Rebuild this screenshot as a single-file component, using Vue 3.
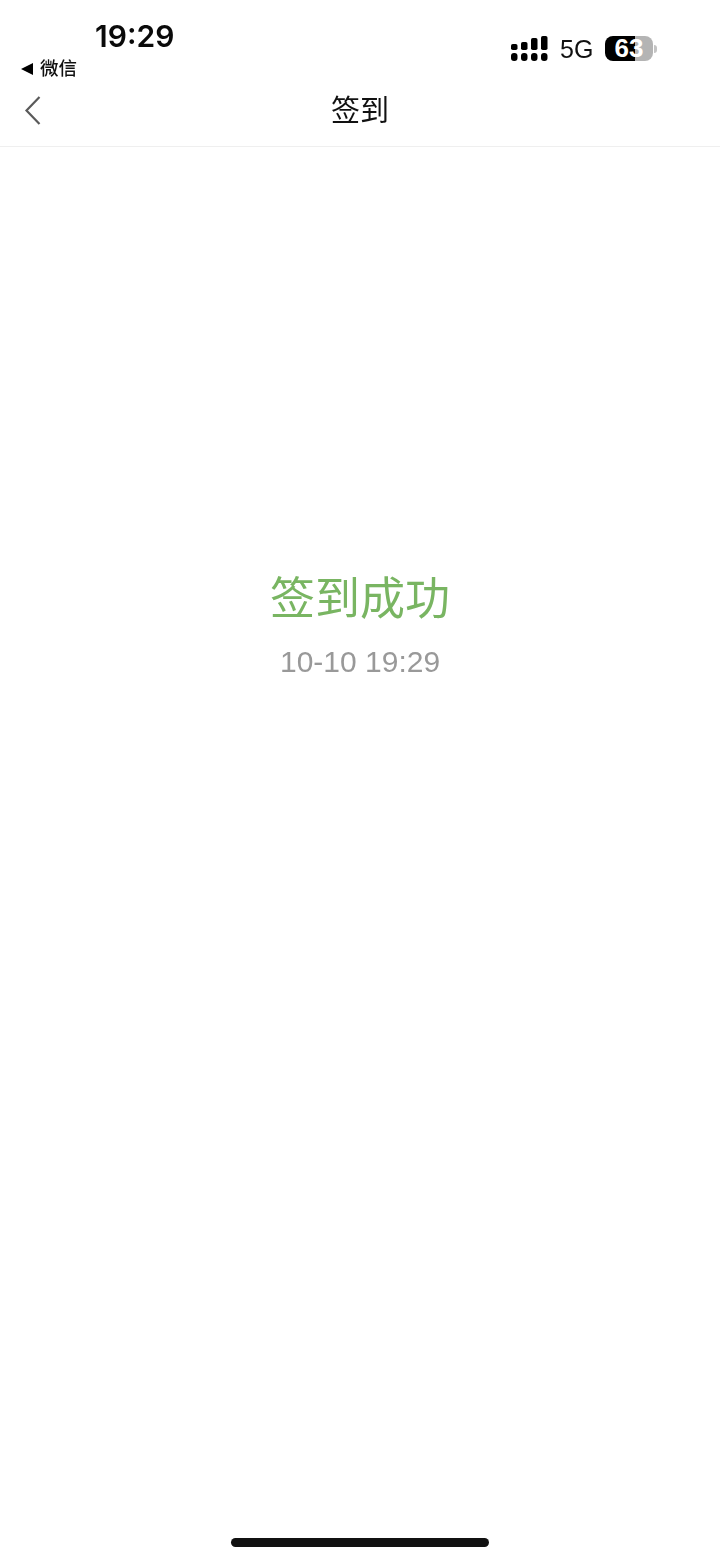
<script setup>
const signal = [
  { x: 0, y: 8, h: 6 },
  { x: 10, y: 6, h: 8 },
  { x: 20, y: 2, h: 12 },
  { x: 30, y: 0, h: 14 }
]
</script>

<template>
  <div class="page">
    <header class="status">
      <div class="status-left">
        <div class="time">19:29</div>
        <div class="back-link"><span class="tri"></span><span>微信</span></div>
      </div>
      <div class="status-right">
        <svg class="signal" width="37" height="25" viewBox="0 0 37 25" aria-hidden="true">
          <g fill="#000">
            <template v-for="bar in signal" :key="bar.x">
              <rect :x="bar.x" :y="bar.y" width="6.5" :height="bar.h" rx="1.8" />
              <rect :x="bar.x" y="17" width="6.5" height="8" rx="3" />
            </template>
          </g>
        </svg>
        <span class="net">5G</span>
        <div class="battery-wrap">
          <div class="battery">63</div>
          <span class="tip"></span>
        </div>
      </div>
    </header>

    <nav class="nav">
      <svg class="chev" width="20" height="32" viewBox="0 0 20 32" aria-hidden="true">
        <path d="M16.5 3 L3.5 16.5 L16.5 30" fill="none" stroke="#5a5a5a" stroke-width="2.2" />
      </svg>
      <h1 class="nav-title">签到</h1>
    </nav>

    <main class="main">
      <div class="headline">签到成功</div>
      <div class="stamp">10-10 19:29</div>
    </main>

    <footer class="home"><span class="home-bar"></span></footer>
  </div>
</template>

<style>
html, body { margin: 0; background: #fff; }
</style>

<style scoped>
.page {
  width: 720px;
  height: 1560px;
  display: flex;
  flex-direction: column;
  background: #fff;
  font-family: "Liberation Sans", "Noto Sans CJK SC", sans-serif;
  overflow: hidden;
}
.status {
  height: 80px;
  display: flex;
  justify-content: space-between;
  align-items: flex-start;
  box-sizing: border-box;
}
.status-left {
  display: flex;
  flex-direction: column;
  padding: 18px 0 0 21px;
}
.time {
  margin-left: 74px;
  font-family: "Inter", "Liberation Sans", sans-serif;
  font-size: 30px;
  line-height: 36px;
  font-weight: 600;
  color: #0a0a0a;
  will-change: transform;
}
.back-link {
  display: flex;
  align-items: center;
  gap: 7px;
  margin-top: 3px;
  font-size: 18.5px;
  line-height: 24px;
  font-weight: 500;
  color: #111;
  will-change: transform;
}
.tri {
  width: 0;
  height: 0;
  border-style: solid;
  border-width: 6px 12px 6px 0;
  border-color: transparent #000 transparent transparent;
}
.status-right {
  display: flex;
  align-items: flex-start;
  padding: 36px 63px 0 0;
}
.signal {
  display: block;
}
.net {
  margin-left: 12px;
  font-size: 25px;
  line-height: 26px;
  color: #111;
  will-change: transform;
}
.battery-wrap {
  display: flex;
  align-items: center;
  margin-left: 12px;
}
.battery {
  width: 48px;
  height: 25px;
  border-radius: 8px;
  background: linear-gradient(90deg, #000 0 30px, #b4b4b4 30px);
  color: #fff;
  font-size: 26px;
  line-height: 25px;
  font-weight: 700;
  text-align: center;
}
.tip {
  width: 3px;
  height: 8px;
  margin-left: 1px;
  border-radius: 0 3px 3px 0;
  background: #c4c4c4;
}
.nav {
  height: 66px;
  flex: none;
  display: flex;
  align-items: center;
  justify-content: center;
  position: relative;
  border-bottom: 1px solid #efefef;
}
.chev {
  position: absolute;
  left: 23px;
  top: 14px;
}
.nav-title {
  margin: 0 0 4px;
  font-size: 29px;
  line-height: 40px;
  font-weight: 400;
  color: #111;
  will-change: transform;
}
.main {
  flex: 1;
  display: flex;
  flex-direction: column;
  align-items: center;
  padding-top: 423px;
}
.headline {
  font-size: 45px;
  line-height: 60px;
  color: #79b562;
  will-change: transform;
}
.stamp {
  margin-top: 15px;
  font-size: 30px;
  line-height: 34px;
  color: #999;
  will-change: transform;
}
.home {
  height: 22px;
  flex: none;
  display: flex;
  justify-content: center;
}
.home-bar {
  width: 258px;
  height: 9px;
  border-radius: 5px;
  background: #111;
}
</style>
